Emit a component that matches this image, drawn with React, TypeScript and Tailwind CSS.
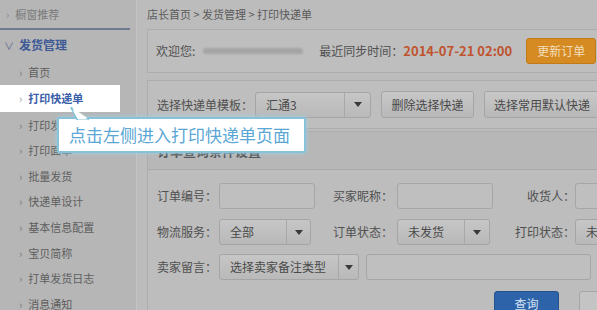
import React from "react";

const F = { fontFamily: '"Noto Sans CJK SC", "Noto Sans", sans-serif' };

function Caret() {
  return (
    <svg width="8" height="5" viewBox="0 0 8 5">
      <path d="M0 0 L8 0 L4 5 Z" fill="#3a3a3a" />
    </svg>
  );
}

function Select({ w, text, arrowW = 24 }: { w: number; text: string; arrowW?: number }) {
  return (
    <div
      className="flex shrink-0 h-[26px] overflow-hidden rounded-[3px] border border-[#a5a5a5] bg-gradient-to-b from-[#c6c6c6] to-[#b9b9b9]"
      style={{ width: w }}
    >
      <div className="flex-1 flex items-center pl-[10px] text-[12px] whitespace-nowrap text-[#4a4a4a]">{text}</div>
      {arrowW > 0 && (
        <div
          className="flex shrink-0 items-center justify-center border-l border-[#a8a8a8]"
          style={{ width: arrowW }}
        >
          <Caret />
        </div>
      )}
    </div>
  );
}

function Input({ w }: { w: number }) {
  return <div className="shrink-0 h-[26px] rounded-[3px] border border-[#a6a6a6] bg-[#bfbfbf]" style={{ width: w }} />;
}

const items = ["打印发货单", "打印面单", "批量发货", "快递单设计", "基本信息配置", "宝贝简称", "打单发货日志", "消息通知"];

export default function App() {
  return (
    <div className="relative w-[597px] h-[310px] overflow-hidden bg-[#bcbcbc] flex" style={F}>
      {/* Sidebar */}
      <div className="w-[137px] shrink-0 bg-[#b6b6b6] border-r border-[#c4c4c4] flex flex-col">
        <div className="h-[28px] shrink-0 flex items-center pl-[6px] text-[11px] text-[#7a7a7a]">
          <span className="mr-[6px] text-[#8a8a8a]">›</span>橱窗推荐
        </div>
        <div className="h-[2px] shrink-0 w-[130px] bg-[#6f7a90]" />
        <div className="h-[30px] shrink-0 flex items-center pl-[4px] text-[12px] font-bold text-[#3d5a96]">
          <span className="mr-[5px] text-[10px] font-normal text-[#5a6a8a]">∨</span>发货管理
        </div>
        <div className="h-[25px] shrink-0 flex items-center pl-[19px] text-[11px] text-[#5e5e5e]">
          <span className="mr-[6px] text-[#777]">›</span>首页
        </div>
        <div className="h-[27px] shrink-0 w-[120px] bg-white flex items-center pl-[19px] text-[11px] font-bold text-[#3b5ea8]">
          <span className="mr-[6px] font-normal text-[#999]">›</span>打印快递单
        </div>
        {items.map((t) => (
          <div key={t} className="h-[25.6px] shrink-0 flex items-center pl-[19px] text-[11px] text-[#5e5e5e]">
            <span className="mr-[6px] text-[#777]">›</span>
            {t}
          </div>
        ))}
      </div>

      {/* Main */}
      <div className="flex-1 min-w-0 pl-[10px] flex flex-col overflow-hidden">
        <div className="h-[29px] shrink-0 flex items-center text-[11px] text-[#5a5a5a]">
          店长首页 &gt; 发货管理 &gt; 打印快递单
        </div>
        <div className="h-[44px] shrink-0 border border-[#adadad] border-r-0 bg-[#bebebe] flex items-center pl-[8px] text-[12px] text-[#505050] whitespace-nowrap">
          <span>欢迎您:</span>
          <div className="ml-[8px] w-[100px] h-[6px] rounded bg-[#a4a4a4] blur-[1px]" />
          <span className="ml-[16px]">最近同步时间：</span>
          <span className="font-bold text-[13px] text-[#c0532e]">2014-07-21 02:00</span>
          <div className="ml-[14px] shrink-0 w-[70px] h-[26px] rounded-[3px] bg-[#d58a22] border border-[#c07a18] flex items-center justify-center text-[12px] text-[#f3dfbf]">
            更新订单
          </div>
        </div>
        <div className="mt-[7px] shrink-0 h-[49px] border border-[#adadad] border-r-0 bg-[#bebebe] flex items-center pl-[9px] text-[12px] text-[#505050] whitespace-nowrap">
          <span>选择快递单模板：</span>
          <div className="ml-[2px]">
            <Select w={116} text="汇通3" arrowW={26} />
          </div>
          <div className="ml-[10px] shrink-0 w-[93px] h-[27px] rounded-[3px] border border-[#a5a5a5] bg-gradient-to-b from-[#c8c8c8] to-[#b8b8b8] flex items-center justify-center text-[12px] text-[#4a4a4a]">
            删除选择快递
          </div>
          <div className="ml-[10px] shrink-0 w-[116px] h-[27px] rounded-[3px] border border-[#a5a5a5] bg-gradient-to-b from-[#c8c8c8] to-[#b8b8b8] flex items-center justify-center text-[12px] text-[#4a4a4a]">
            选择常用默认快递
          </div>
        </div>
        <div className="mt-[2px] shrink-0 h-[200px] border border-[#adadad] border-r-0 border-b-0 bg-[#bdbdbd] flex flex-col text-[12px] text-[#505050] whitespace-nowrap">
          <div className="h-[38px] shrink-0 bg-[#b7b7b7] border-b border-[#a9a9a9] flex items-end pb-[9px] pl-[9px] text-[13px] font-bold text-[#555]">
            订单查询条件设置
          </div>
          <div className="flex shrink-0 items-center h-[26px] mt-[13px] pl-[9px]">
            <span className="w-[62px] shrink-0">订单编号：</span>
            <Input w={96} />
            <span className="ml-[18px] w-[64px] shrink-0">买家昵称：</span>
            <Input w={96} />
            <span className="ml-[34px] w-[48px] shrink-0">收货人：</span>
            <Input w={40} />
          </div>
          <div className="flex shrink-0 items-center h-[26px] mt-[10px] pl-[9px]">
            <span className="w-[62px] shrink-0">物流服务：</span>
            <Select w={92} text="全部" arrowW={24} />
            <span className="ml-[22px] w-[64px] shrink-0">订单状态：</span>
            <Select w={93} text="未发货" arrowW={25} />
            <span className="ml-[25px] w-[60px] shrink-0">打印状态：</span>
            <Select w={40} text="未发货" arrowW={0} />
          </div>
          <div className="flex shrink-0 items-center h-[26px] mt-[9px] pl-[9px]">
            <span className="w-[62px] shrink-0">卖家留言：</span>
            <Select w={140} text="选择卖家备注类型" arrowW={20} />
            <div className="ml-[7px]">
              <Input w={225} />
            </div>
          </div>
          <div className="flex shrink-0 h-[26px] mt-[11px] pl-[346px]">
            <div className="w-[65px] shrink-0 h-[26px] rounded-[3px] bg-[#2d63a8] border border-[#24528e] flex items-center justify-center text-[12px] text-[#d6e2f2]">
              查询
            </div>
            <div className="ml-[20px] shrink-0 w-[40px] h-[26px] rounded-[3px] border border-[#a5a5a5] bg-[#c4c4c4]" />
          </div>
        </div>
      </div>

      {/* Tooltip */}
      <div className="absolute left-[57px] top-[117px] w-[249px] h-[36px] bg-white border-2 border-[#86c3da] rounded-[2px] shadow-[0_0_4px_#9fd0e2] flex items-center pl-[10px] text-[17px] text-[#5aa6d4] whitespace-nowrap">
        点击左侧进入打印快递单页面
        <svg className="absolute left-[10px] top-[-12px]" width="20" height="13" viewBox="0 0 20 13">
          <path d="M2 0 L8 12 L20 12" fill="white" stroke="#86c3da" strokeWidth="2" />
          <path d="M3.5 3 L9 12.5 L19 12.5" fill="white" stroke="none" />
        </svg>
      </div>
    </div>
  );
}
